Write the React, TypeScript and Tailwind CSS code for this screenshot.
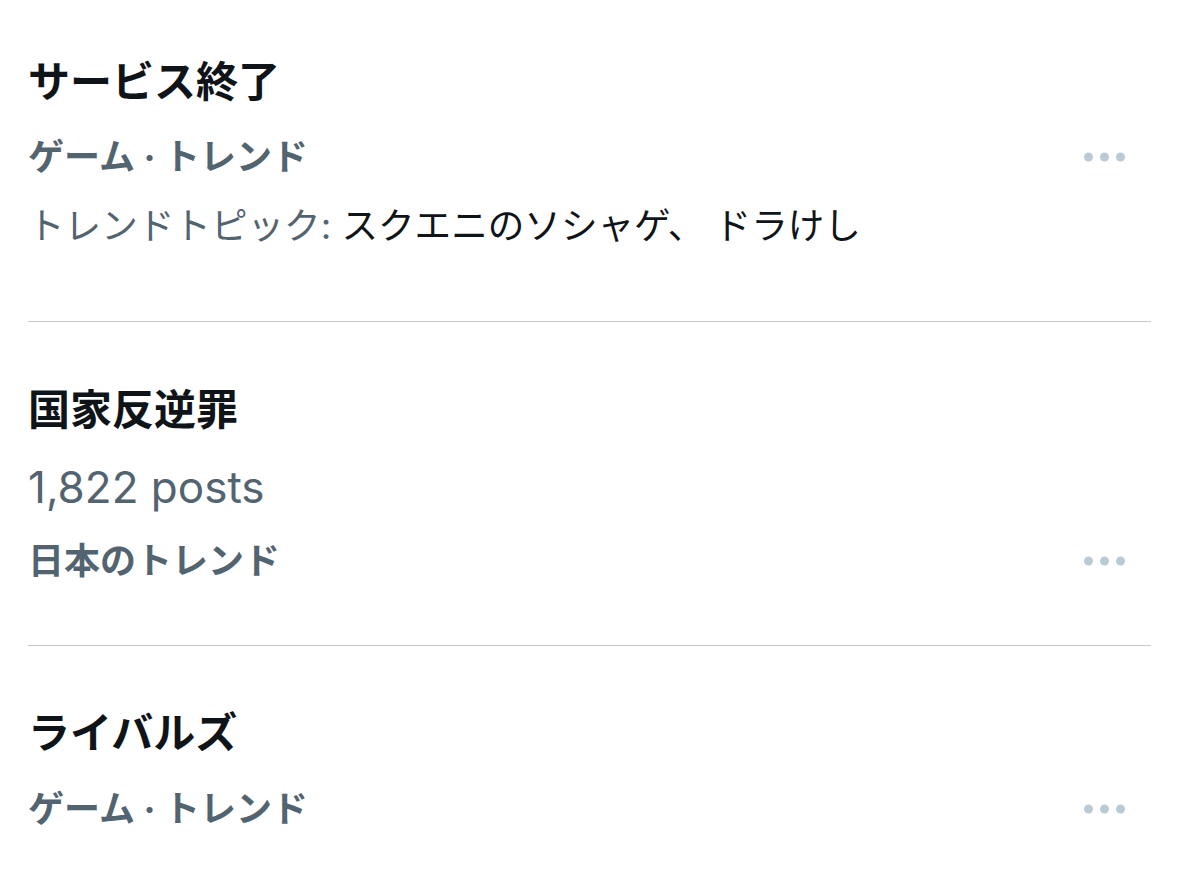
import React from 'react';

const font = { fontFamily: '"Inter", "Noto Sans CJK JP", sans-serif' };

function MoreDots() {
  return (
    <svg width="41" height="10" viewBox="0 0 41 10" className="shrink-0">
      <circle cx="4.5" cy="5" r="4.5" fill="#b9cad4" />
      <circle cx="20.5" cy="5" r="4.5" fill="#b9cad4" />
      <circle cx="36.5" cy="5" r="4.5" fill="#b9cad4" />
    </svg>
  );
}

export default function App() {
  return (
    <div className="min-h-screen w-full bg-white text-[#0f1419]" style={font}>
      <div className="px-[28px]">
        {/* Trend 1 */}
        <div className="border-b border-[#c8c8c8] pb-[71px] pt-[56px]">
          <div className="text-[42px] font-bold leading-[52px]">サービス終了</div>
          <div className="mt-[25px] flex items-center justify-between">
            <span className="text-[36px] font-bold leading-[48px] text-[#536471]">ゲーム · トレンド</span>
            <span className="mr-[26px]">
              <MoreDots />
            </span>
          </div>
          <div className="mt-[21px] text-[36.6px] leading-[48px]">
            <span className="text-[#536471]">トレンドトピック: </span>
            スクエニのソシャゲ、 ドラけし
          </div>
        </div>

        {/* Trend 2 */}
        <div className="border-b border-[#c8c8c8] pb-[60px] pt-[62px]">
          <div className="text-[42px] font-bold leading-[52px]">国家反逆罪</div>
          <div className="mt-[25px] text-[44px] leading-[52px] text-[#536471]">1,822 posts</div>
          <div className="mt-[24px] flex items-center justify-between">
            <span className="text-[36px] font-bold leading-[48px] text-[#536471]">日本のトレンド</span>
            <span className="mr-[26px]">
              <MoreDots />
            </span>
          </div>
        </div>

        {/* Trend 3 */}
        <div className="pt-[61px]">
          <div className="text-[42px] font-bold leading-[52px]">ライバルズ</div>
          <div className="mt-[26px] flex items-center justify-between">
            <span className="text-[36px] font-bold leading-[48px] text-[#536471]">ゲーム · トレンド</span>
            <span className="mr-[26px]">
              <MoreDots />
            </span>
          </div>
        </div>
      </div>
    </div>
  );
}
